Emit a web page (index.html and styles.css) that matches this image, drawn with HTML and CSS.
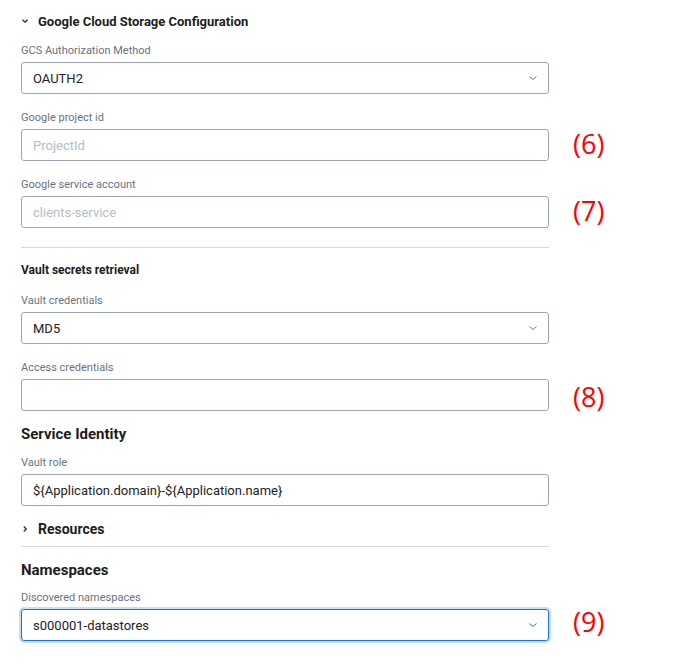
FILE: index.html
```html
<!DOCTYPE html>
<html>
<head>
<meta charset="utf-8">
<link rel="stylesheet" href="styles.css">
</head>
<body>
<div class="page">
  <div class="section-toggle first">
    <svg class="chev" width="10" height="10" viewBox="0 0 10 10"><path d="M2.5 3.8 L5 6.2 L7.5 3.8" fill="none" stroke="#222" stroke-width="1.2"/></svg>
    <span>Google Cloud Storage Configuration</span>
  </div>

  <div class="field">
    <div class="label">GCS Authorization Method</div>
    <div class="row">
      <div class="box select"><span class="value">OAUTH2</span>
        <svg class="caret" width="10" height="6" viewBox="0 0 10 6"><path d="M1.5 1.5 L5 4.5 L8.5 1.5" fill="none" stroke="#6b7785" stroke-width="1"/></svg>
      </div>
    </div>
  </div>

  <div class="field">
    <div class="label">Google project id</div>
    <div class="row">
      <div class="box"><span class="placeholder">ProjectId</span></div>
      <span class="note">(6)</span>
    </div>
  </div>

  <div class="field">
    <div class="label">Google service account</div>
    <div class="row">
      <div class="box"><span class="placeholder">clients-service</span></div>
      <span class="note">(7)</span>
    </div>
  </div>

  <hr class="divider first-div">

  <div class="subhead">Vault secrets retrieval</div>

  <div class="field">
    <div class="label">Vault credentials</div>
    <div class="row">
      <div class="box select"><span class="value">MD5</span>
        <svg class="caret" width="10" height="6" viewBox="0 0 10 6"><path d="M1.5 1.5 L5 4.5 L8.5 1.5" fill="none" stroke="#6b7785" stroke-width="1"/></svg>
      </div>
    </div>
  </div>

  <div class="field">
    <div class="label">Access credentials</div>
    <div class="row">
      <div class="box"></div>
      <span class="note low">(8)</span>
    </div>
  </div>

  <div class="heading">Service Identity</div>

  <div class="field">
    <div class="label">Vault role</div>
    <div class="row">
      <div class="box"><span class="value">${Application.domain}-${Application.name}</span></div>
    </div>
  </div>

  <div class="section-toggle res">
    <svg class="chev" width="10" height="10" viewBox="0 0 10 10"><path d="M3.8 2.5 L6.2 5 L3.8 7.5" fill="none" stroke="#222" stroke-width="1.2"/></svg>
    <span>Resources</span>
  </div>

  <hr class="divider second-div">

  <div class="heading ns">Namespaces</div>

  <div class="field">
    <div class="label">Discovered namespaces</div>
    <div class="row">
      <div class="box select focused"><span class="value">s000001-datastores</span>
        <svg class="caret" width="10" height="6" viewBox="0 0 10 6"><path d="M1.5 1.5 L5 4.5 L8.5 1.5" fill="none" stroke="#1a73d9" stroke-width="1"/></svg>
      </div>
      <span class="note high">(9)</span>
    </div>
  </div>
</div>
</body>
</html>
```

FILE: styles.css
```css
* { box-sizing: border-box; }
html, body { margin: 0; padding: 0; background: #fff; }
body { font-family: Roboto, "Noto Sans", sans-serif; color: #1f1f1f; }
.page { padding: 11px 0 0 21px; width: 678px; }

.section-toggle { display: flex; align-items: center; height: 20px; font-size: 13px; font-weight: 700; color: #1d1d1d; margin-left: -1px; }
.section-toggle .chev { margin-right: 8px; }
.section-toggle.first { margin-bottom: 13px; }
.section-toggle.res { margin-top: -4px; font-size: 14px; }

.field { margin-bottom: 17px; }
.label { font-size: 11px; line-height: 14px; color: #6b7280; margin-bottom: 4px; }
.row { display: flex; align-items: center; height: 32px; }
.box { width: 528px; height: 32px; border: 1px solid #9aa6b2; border-radius: 3px; display: flex; align-items: center; padding: 0 11px; font-size: 13px; flex-shrink: 0; }
.select { justify-content: space-between; padding-right: 10px; }
.value { color: #222; }
.placeholder { color: #b4bcc6; }
.focused { border-color: #1a73d9; box-shadow: 0 0 0 2px #c7def7; }
.note { margin-left: 24px; font-family: "Open Sans", "Noto Sans", sans-serif; font-size: 27px; color: #ff0000; line-height: 1; position: relative; top: -2px; }
.note.low { top: 1px; }
.note.high { top: -4px; }

.divider { width: 528px; border: 0; border-top: 1px solid #d6d8db; margin: 19px 0 14px 0; }
.divider.second-div { margin-top: 7px; }
.subhead { font-size: 12px; font-weight: 700; line-height: 16px; color: #1d1d1d; margin-bottom: 16px; }
.heading { font-size: 15px; font-weight: 700; line-height: 20px; color: #1d1d1d; margin-top: -4px; margin-bottom: 12px; }
.heading.ns { margin-top: -1px; margin-bottom: 11px; }
```
